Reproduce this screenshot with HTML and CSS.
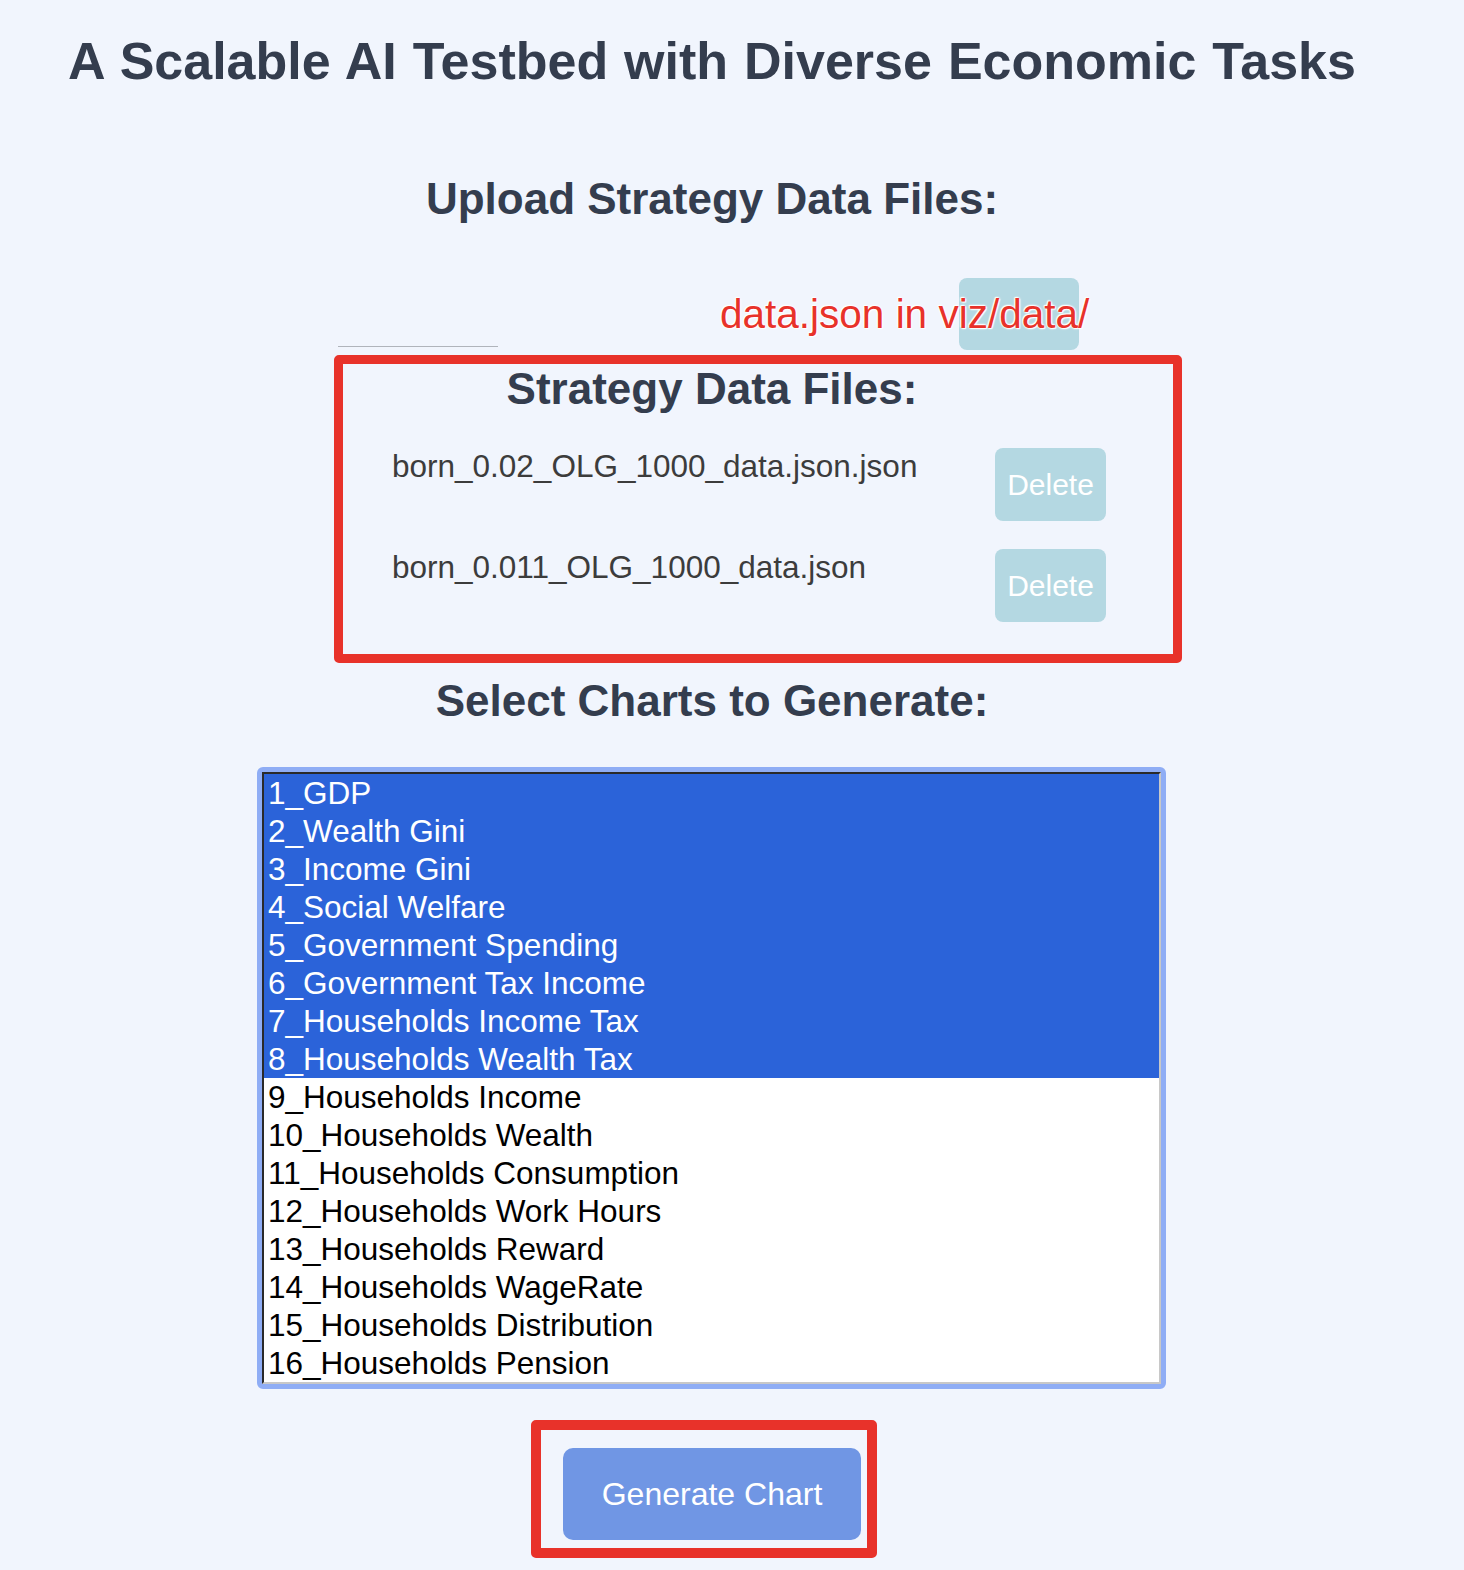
FILE: index.html
```html
<!DOCTYPE html>
<html lang="en">
<head>
<meta charset="utf-8">
<title>A Scalable AI Testbed with Diverse Economic Tasks</title>
<link rel="stylesheet" href="styles.css">
</head>
<body>
<div class="page">
  <h1 class="title">A Scalable AI Testbed with Diverse Economic Tasks</h1>

  <h2 class="section-title upload-title">Upload Strategy Data Files:</h2>
  <div class="upload-row">
    <div class="file-input"></div>
    <button class="btn-light upload-btn" aria-label="Upload"></button>
  </div>

  <h2 class="section-title files-title">Strategy Data Files:</h2>
  <div class="file-list">
    <div class="file-row">
      <span class="file-name">born_0.02_OLG_1000_data.json.json</span>
      <button class="btn-light delete-btn">Delete</button>
    </div>
    <div class="file-row">
      <span class="file-name">born_0.011_OLG_1000_data.json</span>
      <button class="btn-light delete-btn">Delete</button>
    </div>
  </div>

  <h2 class="section-title charts-title">Select Charts to Generate:</h2>
  <div class="listbox-ring">
    <div class="listbox" role="listbox" aria-multiselectable="true">
      <div class="opt sel">1_GDP</div>
      <div class="opt sel">2_Wealth Gini</div>
      <div class="opt sel">3_Income Gini</div>
      <div class="opt sel">4_Social Welfare</div>
      <div class="opt sel">5_Government Spending</div>
      <div class="opt sel">6_Government Tax Income</div>
      <div class="opt sel">7_Households Income Tax</div>
      <div class="opt sel">8_Households Wealth Tax</div>
      <div class="opt">9_Households Income</div>
      <div class="opt">10_Households Wealth</div>
      <div class="opt">11_Households Consumption</div>
      <div class="opt">12_Households Work Hours</div>
      <div class="opt">13_Households Reward</div>
      <div class="opt">14_Households WageRate</div>
      <div class="opt">15_Households Distribution</div>
      <div class="opt">16_Households Pension</div>
    </div>
  </div>

  <div class="actions">
    <button class="btn-generate">Generate Chart</button>
  </div>

  <div class="annot-text">data.json in viz/data/</div>
  <div class="annot-box annot-files"></div>
  <div class="annot-box annot-generate"></div>
</div>
</body>
</html>
```

FILE: styles.css
```css
html, body {
  margin: 0;
  padding: 0;
  background: #f1f5fd;
}

body {
  font-family: "Liberation Sans", Arial, Helvetica, sans-serif;
  color: #343d4e;
}

.page {
  position: relative;
  width: 1424px;
  min-height: 1570px;
  padding-top: 31px;
  box-sizing: border-box;
}

.title {
  margin: 0;
  font-size: 52px;
  line-height: 60px;
  font-weight: 700;
  text-align: center;
  word-spacing: 1.5px;
  color: #343d4e;
}

.section-title {
  margin: 0;
  font-size: 44px;
  line-height: 52px;
  font-weight: 700;
  text-align: center;
  color: #343d4e;
}

.upload-title {
  margin-top: 82px;
}

.upload-row {
  width: 741px;
  margin: 53px 0 0 338px;
  display: flex;
  justify-content: space-between;
  align-items: flex-end;
  height: 72px;
}

.file-input {
  width: 160px;
  height: 68px;
  border-bottom: 1px solid #b0b4bb;
  margin-bottom: 3px;
}

.btn-light {
  border: none;
  background: #b4d8e2;
  color: #ffffff;
  border-radius: 8px;
  font-family: "Liberation Sans", Arial, sans-serif;
  padding: 0;
}

.upload-btn {
  width: 120px;
  height: 72px;
}

.files-title {
  margin-top: 13px;
}

.file-list {
  margin-left: 392px;
  width: 714px;
  margin-top: 33px;
  display: flex;
  flex-direction: column;
  gap: 28px;
}

.file-row {
  display: flex;
  justify-content: space-between;
  align-items: flex-start;
}

.file-name {
  font-size: 31.5px;
  line-height: 36px;
  color: #3c3c3c;
  font-weight: 400;
}

.delete-btn {
  width: 111px;
  height: 73px;
  font-size: 30px;
}

.charts-title {
  margin-top: 53px;
}

.listbox-ring {
  width: 899px;
  margin: 40px 0 0 257px;
  border: 5px solid #8fadf5;
  border-radius: 6px;
}

.listbox {
  background: #ffffff;
  border: 2px solid;
  border-color: #2a2a2a #c8c8c8 #c8c8c8 #2a2a2a;
}

.opt {
  height: 38px;
  line-height: 38px;
  font-size: 31.5px;
  padding-left: 4px;
  color: #000000;
  white-space: nowrap;
}

.opt.sel {
  background: #2b63d9;
  color: #ffffff;
}

.actions {
  display: flex;
  justify-content: center;
  margin-top: 59px;
}

.btn-generate {
  width: 298px;
  height: 92px;
  border: none;
  border-radius: 10px;
  background: #7096e4;
  color: #ffffff;
  font-family: "Liberation Sans", Arial, sans-serif;
  font-size: 32px;
}

.annot-text {
  position: absolute;
  left: 720px;
  top: 291px;
  font-size: 40.5px;
  line-height: 46px;
  color: #e8322a;
  white-space: nowrap;
  text-shadow: 0 0 2px #ffffff, 0 0 2px #ffffff, 0 0 3px #ffffff, 1px 1px 1px #ffffff, -1px -1px 1px #ffffff;
}

.annot-box {
  position: absolute;
  border: 9px solid #e8322a;
  border-radius: 5px;
  box-sizing: border-box;
}

.annot-files {
  left: 334px;
  top: 355px;
  width: 848px;
  height: 308px;
}

.annot-generate {
  left: 531px;
  top: 1420px;
  width: 346px;
  height: 138px;
  border-width: 10px;
}
```
